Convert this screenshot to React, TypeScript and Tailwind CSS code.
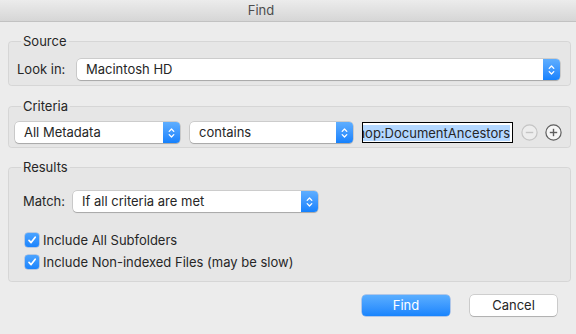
import type { ReactNode } from "react";
import clsx from "clsx";

function Chevrons() {
	return (
		<svg width="7" height="12" viewBox="0 0 7 12" fill="none" stroke="white" strokeWidth="1.3" strokeLinecap="round" strokeLinejoin="round">
			<path d="M1.2 4.4 L3.5 2 L5.8 4.4" />
			<path d="M1.2 7.6 L3.5 10 L5.8 7.6" />
		</svg>
	);
}

function PopUp({ label, className }: { label: string; className?: string }) {
	return (
		<div
			className={clsx(
				"flex h-[21px] rounded-[4px] bg-white shadow-[0_0_0_0.5px_rgba(0,0,0,0.22),0_1px_1px_rgba(0,0,0,0.18)]",
				className,
			)}
		>
			<span className="flex-1 truncate pl-[9px] leading-[21px]">{label}</span>
			<span className="flex w-[17px] items-center justify-center rounded-r-[4px] bg-linear-to-b from-[#5eaeff] to-[#1381fd]">
				<Chevrons />
			</span>
		</div>
	);
}

function Group({ title, className, children }: { title: string; className?: string; children: ReactNode }) {
	return (
		<fieldset className={clsx("rounded-[4px] border border-black/[0.07] bg-black/[0.025]", className)}>
			<legend className="ml-[12px] px-[2px] leading-[16px]">{title}</legend>
			{children}
		</fieldset>
	);
}

function Check({ label }: { label: string }) {
	return (
		<div className="flex items-center gap-[4px]">
			<span className="flex h-[14px] w-[14px] items-center justify-center rounded-[3px] bg-linear-to-b from-[#4aa3ff] to-[#1a84fd] shadow-[0_0_0_0.5px_rgba(0,80,200,0.4)]">
				<svg width="10" height="10" viewBox="0 0 10 10" fill="none" stroke="white" strokeWidth="1.7" strokeLinecap="round" strokeLinejoin="round">
					<path d="M2 5.4 L4.1 7.6 L8.2 2.2" />
				</svg>
			</span>
			<span className="leading-[16px]">{label}</span>
		</div>
	);
}

function RoundButton({ sign, dim }: { sign: "-" | "+"; dim?: boolean }) {
	const stroke = dim ? "#c4c4c4" : "#5e5e5e";
	return (
		<svg width="17" height="17" viewBox="0 0 17 17" fill="none" stroke={stroke} strokeWidth="1.2">
			<circle cx="8.5" cy="8.5" r="7.6" fill={dim ? "#ededed" : "#f6f6f6"} />
			<path d="M4.8 8.5 H12.2" strokeWidth="1.4" />
			{sign === "+" && <path d="M8.5 4.8 V12.2" strokeWidth="1.4" />}
		</svg>
	);
}

export default function App() {
	return (
		<div className="flex h-[334px] w-[576px] flex-col overflow-hidden bg-[#ececec] font-[family-name:Inter,'Liberation_Sans',sans-serif] text-[13px] text-[#262626]">
			<div className="flex h-[22px] shrink-0 items-center justify-center border-b border-[#c2c2c2] bg-linear-to-b from-[#ececec] to-[#d6d6d6] pr-[54px] text-[#4d4d4d]">
				Find
			</div>

			<div className="flex flex-col pl-[8px] pr-[5px]">
				<Group title="Source" className="mt-[11px] pb-[5px] pt-[10px]">
					<div className="flex items-center pl-[8px] pr-[10px]">
						<span className="w-[60px]">Look in:</span>
						<PopUp label="Macintosh HD" className="flex-1" />
					</div>
				</Group>

				<Group title="Criteria" className="mt-[12px] pb-[4px] pt-[8px]">
					<div className="flex items-center pl-[6px]">
						<PopUp label="All Metadata" className="w-[165px]" />
						<PopUp label="contains" className="ml-[10px] w-[163px]" />
						<div className="ml-[9px] flex h-[21px] w-[151px] items-center justify-end overflow-hidden border border-black bg-white px-[2px]">
							<span className="whitespace-nowrap bg-[#b3d7ff] leading-[16px]">photoshop:DocumentAncestors</span>
						</div>
						<div className="ml-[8px] flex items-center gap-[7px]">
							<RoundButton sign="-" dim />
							<RoundButton sign="+" />
						</div>
					</div>
				</Group>

				<Group title="Results" className="mt-[11px] pb-[11px] pt-[16px]">
					<div className="flex items-center pl-[14px]">
						<span className="w-[50px]">Match:</span>
						<PopUp label="If all criteria are met" className="w-[245px]" />
					</div>
					<div className="mt-[20px] flex flex-col gap-[6px] pl-[16px]">
						<Check label="Include All Subfolders" />
						<Check label="Include Non-indexed Files (may be slow)" />
					</div>
				</Group>
			</div>

			<div className="mt-[13px] flex justify-end gap-[20px] pr-[19px]">
				<button className="h-[21px] w-[88px] rounded-[4px] bg-linear-to-b from-[#5aaeff] to-[#1784fd] text-white shadow-[0_0_0_0.5px_rgba(0,90,220,0.5)]">
					Find
				</button>
				<button className="h-[21px] w-[87px] rounded-[4px] bg-white shadow-[0_0_0_0.5px_rgba(0,0,0,0.25),0_1px_1px_rgba(0,0,0,0.15)]">
					Cancel
				</button>
			</div>
		</div>
	);
}
